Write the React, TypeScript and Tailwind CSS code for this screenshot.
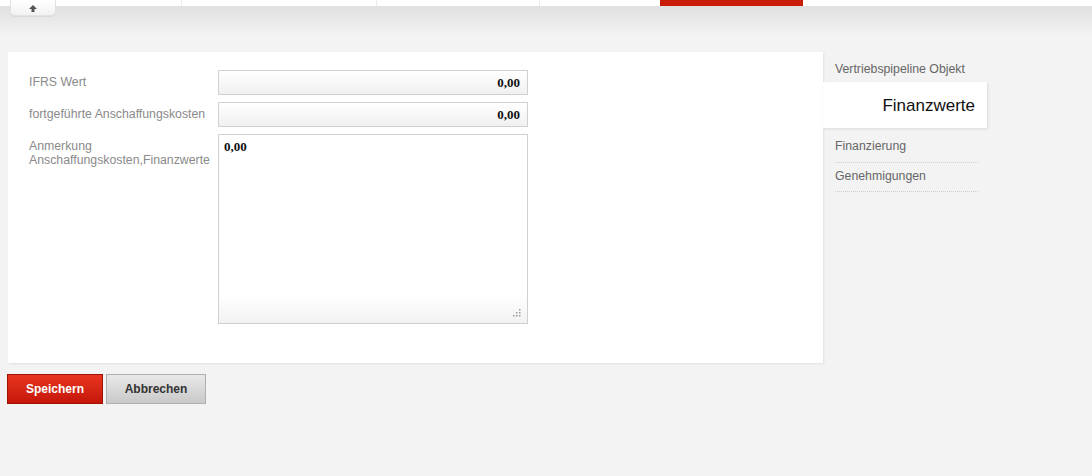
const NAV_ABOVE = ["Vertriebspipeline Objekt"];
const NAV_BELOW = ["Finanzierung", "Genehmigungen"];

function TopBar() {
  return (
    <div className="relative">
      <div className="flex h-[6px] bg-white">
        <div className="w-[182px] border-r border-[#ececec]" />
        <div className="w-[195px] border-r border-[#ececec]" />
        <div className="w-[163px] border-r border-[#ececec]" />
        <div className="w-[120px]" />
        <div className="w-[143px] bg-[#c81c06]" />
        <div className="flex-1" />
      </div>
      <div className="h-[30px] bg-gradient-to-b from-[#e0e0e0] to-[#f3f3f3]" />
      {/* collapse tab */}
      <div className="absolute left-[10px] top-0 flex h-[16px] w-[46px] items-center justify-center rounded-b-[5px] border border-t-0 border-[#e2e2e2] bg-gradient-to-b from-white to-[#f2f2f2] shadow-[0_1px_1px_rgba(0,0,0,0.06)]">
        <svg width="8" height="7" viewBox="0 0 8 7" className="mt-[2px]">
          <path d="M4 0 L8 4 L5.5 4 L5.5 7 L2.5 7 L2.5 4 L0 4 Z" fill="#555" />
        </svg>
      </div>
    </div>
  );
}

function Field({ label, value }: { label: string; value: string }) {
  return (
    <div className="flex items-start">
      <label className="w-[189px] pt-[5px] text-[12.3px] leading-[14px] text-[#8a8a8a]">{label}</label>
      <div className="flex h-[25px] w-[310px] items-center justify-end border border-[#d0d0d0] bg-gradient-to-b from-white to-[#f0f0f0] px-[7px] font-['Liberation_Serif',serif] text-[13px] font-bold text-[#111]">
        {value}
      </div>
    </div>
  );
}

export default function App() {
  return (
    <div className="min-h-[476px] bg-[#f3f3f3] font-['Liberation_Sans',Arial,sans-serif]">
      <TopBar />
      <div className="flex pl-[8px] pt-[16px]">
        <div className="flex flex-col">
          <div className="h-[311px] w-[815px] bg-white pl-[21px] pt-[18px] shadow-[1px_1px_2px_rgba(0,0,0,0.08)]">
            <div className="flex flex-col gap-[7px]">
              <Field label="IFRS Wert" value="0,00" />
              <Field label="fortgeführte Anschaffungskosten" value="0,00" />
              <div className="flex items-start">
                <label className="w-[189px] pt-[5px] text-[12.3px] leading-[14px] text-[#8a8a8a]">
                  Anmerkung
                  <br />
                  Anschaffungskosten,Finanzwerte
                </label>
                <div className="relative h-[190px] w-[310px] border border-[#d0d0d0] bg-gradient-to-b from-white from-85% to-[#f2f2f2] px-[5px] pt-[2px] font-['Liberation_Serif',serif] text-[13px] font-bold text-[#111]">
                  0,00
                  <svg width="9" height="9" viewBox="0 0 9 9" className="absolute bottom-[6px] right-[6px]">
                    <rect x="7" y="1" width="1.5" height="1.5" fill="#999" />
                    <rect x="4" y="4" width="1.5" height="1.5" fill="#999" />
                    <rect x="7" y="4" width="1.5" height="1.5" fill="#999" />
                    <rect x="1" y="7" width="1.5" height="1.5" fill="#999" />
                    <rect x="4" y="7" width="1.5" height="1.5" fill="#999" />
                    <rect x="7" y="7" width="1.5" height="1.5" fill="#999" />
                  </svg>
                </div>
              </div>
            </div>
          </div>
          <div className="-ml-[1px] mt-[11px] flex gap-[3px]">
            <button className="h-[30px] w-[96px] border border-[#9e1204] bg-gradient-to-b from-[#e8341f] to-[#c4170a] text-[12px] font-bold text-white">
              Speichern
            </button>
            <button className="h-[30px] w-[100px] border border-[#b0b0b0] bg-gradient-to-b from-[#e8e8e8] to-[#c9c9c9] text-[12px] font-bold text-[#333]">
              Abbrechen
            </button>
          </div>
        </div>
        <nav className="w-[164px] text-[12.3px] text-[#666]">
          {NAV_ABOVE.map((t) => (
            <div key={t} className="pl-[12px] pt-[8px] pb-[4px]">{t}</div>
          ))}
          <div className="flex h-[46px] items-center justify-end bg-white pr-[12px] text-[17px] text-[#111] shadow-[1px_1px_3px_rgba(0,0,0,0.1)]">
            Finanzwerte
          </div>
          <div className="ml-[12px] mr-[9px] mt-[5px]">
            {NAV_BELOW.map((t) => (
              <div key={t} className="border-b border-dotted border-[#cfcfcf] pt-[4px] pb-[6px]">{t}</div>
            ))}
          </div>
        </nav>
      </div>
    </div>
  );
}
